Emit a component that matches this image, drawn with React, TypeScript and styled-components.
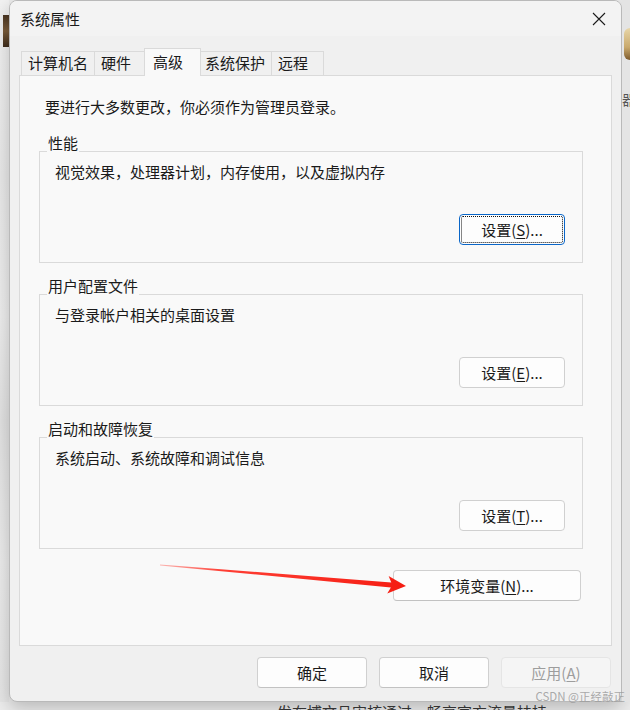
import React from 'react';
import styled, { createGlobalStyle } from 'styled-components';

const GlobalStyle = createGlobalStyle`
  html, body {
    margin: 0;
    padding: 0;
    background: #e9e9e9;
  }
  * {
    box-sizing: border-box;
  }
`;

const FONT = `"Noto Sans CJK SC", "Microsoft YaHei UI", "Noto Sans", sans-serif`;

const tabs = ['计算机名', '硬件', '高级', '系统保护', '远程'];

const groups = [
  { title: '性能', desc: '视觉效果，处理器计划，内存使用，以及虚拟内存', key: 'S', focused: true },
  { title: '用户配置文件', desc: '与登录帐户相关的桌面设置', key: 'E', focused: false },
  { title: '启动和故障恢复', desc: '系统启动、系统故障和调试信息', key: 'T', focused: false },
];

function Label({ text, hotkey }: { text: string; hotkey: string }) {
  return (
    <>
      {text}(<u>{hotkey}</u>)...
    </>
  );
}

function App() {
  return (
    <Page>
      <GlobalStyle />
      <MainRow>
        <LeftStrip>
          <Thumb />
        </LeftStrip>
        <Window>
          <TitleBar>
            <Title>系统属性</Title>
            <CloseButton>
              <svg width="14" height="14" viewBox="0 0 14 14">
                <path d="M1 1 L13 13 M13 1 L1 13" stroke="#1b1b1b" strokeWidth="1.1" fill="none" />
              </svg>
            </CloseButton>
          </TitleBar>
          <Body>
            <TabRow>
              {tabs.map((t) => (
                <Tab key={t} $active={t === '高级'}>
                  {t}
                </Tab>
              ))}
            </TabRow>
            <Panel>
              <Intro>要进行大多数更改，你必须作为管理员登录。</Intro>
              {groups.map((g, i) => (
                <Group key={g.title} $first={i === 0}>
                  <GroupTitle>{g.title}</GroupTitle>
                  <GroupDesc>{g.desc}</GroupDesc>
                  <SettingsButton $focused={g.focused}>
                    <Label text="设置" hotkey={g.key} />
                  </SettingsButton>
                </Group>
              ))}
              <EnvButton>
                <Label text="环境变量" hotkey="N" />
              </EnvButton>
            </Panel>
          </Body>
          <Footer>
            <DialogButton>确定</DialogButton>
            <DialogButton>取消</DialogButton>
            <DialogButton disabled>
              应用(<u>A</u>)
            </DialogButton>
          </Footer>
        </Window>
        <RightStrip>
          <Avatar />
          <SideGlyph>器</SideGlyph>
        </RightStrip>
      </MainRow>
      <BottomStrip>发布博文且审核通过，畅享官方流量扶持</BottomStrip>

      <Watermark>CSDN @正经敲正</Watermark>
      <ArrowLayer width="630" height="710" viewBox="0 0 630 710">
        <defs>
          <linearGradient id="arrowFade" x1="160" y1="565" x2="405" y2="586" gradientUnits="userSpaceOnUse">
            <stop offset="0" stopColor="#ff3b30" stopOpacity="0.35" />
            <stop offset="0.25" stopColor="#ff2a1f" stopOpacity="0.9" />
            <stop offset="1" stopColor="#f51d12" />
          </linearGradient>
        </defs>
        <polygon
          points="160,564.6 391.3,582.4 388.6,576 406,586 387.2,593.4 390.9,587.4 160,565.4"
          fill="url(#arrowFade)"
        />
      </ArrowLayer>
    </Page>
  );
}

const Page = styled.div`
  position: relative;
  width: 630px;
  height: 710px;
  overflow: hidden;
  display: flex;
  flex-direction: column;
  background: #ececec;
  font-family: ${FONT};
`;

const MainRow = styled.div`
  display: flex;
  height: 702px;
`;

const LeftStrip = styled.div`
  width: 9px;
  padding-top: 15px;
  background: linear-gradient(180deg, #f2f2f2 0%, #e9e9e9 25%, #eeeeee 45%, #e2e2e2 60%, #ececec 80%, #e6e6e6 100%);
`;

const Thumb = styled.div`
  margin-left: 3px;
  width: 6px;
  height: 32px;
  background: linear-gradient(180deg, #4a3522, #7a5c3a 50%, #3e2c1c);
`;

const RightStrip = styled.div`
  width: 8px;
  padding-top: 28px;
  display: flex;
  flex-direction: column;
  align-items: flex-end;
  background: #e4e4e4;
`;

const Avatar = styled.div`
  width: 6px;
  height: 32px;
  border-radius: 6px 0 0 6px;
  background: linear-gradient(180deg, #e8d6a8, #c9a96c 60%, #7d5a2c);
`;

const SideGlyph = styled.div`
  margin-top: 30px;
  width: 8px;
  overflow: hidden;
  font-size: 14px;
  line-height: 18px;
  color: #555;
  white-space: nowrap;
`;

const Window = styled.div`
  width: 613px;
  height: 702px;
  display: flex;
  flex-direction: column;
  background: #f0f0f0;
  border: 1px solid #b9b9b9;
  border-radius: 8px;
  box-shadow: 0 6px 18px rgba(0, 0, 0, 0.22);
  overflow: hidden;
`;

const TitleBar = styled.div`
  height: 35px;
  display: flex;
  align-items: center;
  justify-content: space-between;
  padding-left: 10px;
  background: #f3f3f3;
`;

const Title = styled.span`
  font-size: 15px;
  color: #1a1a1a;
`;

const CloseButton = styled.div`
  width: 44px;
  height: 35px;
  display: flex;
  align-items: center;
  justify-content: center;
`;

const Body = styled.div`
  padding: 12px 9px 0 9px;
  display: flex;
  flex-direction: column;
`;

const TabRow = styled.div`
  height: 27px;
  display: flex;
  align-items: flex-end;
  padding-left: 2px;
`;

const Tab = styled.div<{ $active: boolean }>`
  position: relative;
  min-width: ${(p) => (p.$active ? '57px' : '53px')};
  height: ${(p) => (p.$active ? '28px' : '24px')};
  margin: ${(p) => (p.$active ? '0 -2px -1px -3px' : '0 0 0 -1px')};
  padding: ${(p) => (p.$active ? '3px 8px 0 8px' : '1px 6px 0 6px')};
  z-index: ${(p) => (p.$active ? 2 : 1)};
  font-size: 15px;
  line-height: 20px;
  color: #1a1a1a;
  background: ${(p) => (p.$active ? '#f9f9f9' : '#f0f0f0')};
  border: 1px solid #dadada;
  border-bottom: none;

  &:first-child {
    margin-left: 0;
  }
`;

const Panel = styled.div`
  height: 571px;
  display: flex;
  flex-direction: column;
  padding: 21px 28px 0 19px;
  background: #f9f9f9;
  border: 1px solid #dadada;
`;

const Intro = styled.div`
  margin-left: 6px;
  font-size: 15px;
  line-height: 20px;
  color: #1a1a1a;
`;

const Group = styled.div<{ $first: boolean }>`
  position: relative;
  height: 112px;
  margin-top: ${(p) => (p.$first ? '34px' : '31px')};
  display: flex;
  flex-direction: column;
  padding: 10px 17px 0 15px;
  border: 1px solid #dadada;
`;

const GroupTitle = styled.span`
  position: absolute;
  top: -19px;
  left: 7px;
  padding: 0 1px;
  font-size: 15px;
  line-height: 20px;
  color: #1a1a1a;
  background: #f9f9f9;
`;

const GroupDesc = styled.div`
  font-size: 15px;
  line-height: 20px;
  color: #1a1a1a;
`;

const ButtonBase = styled.button`
  height: 31px;
  padding: 0;
  font-family: ${FONT};
  font-size: 15px;
  color: #1a1a1a;
  background: #fdfdfd;
  border: 1px solid #d0d0d0;
  border-bottom-color: #c2c2c2;
  border-radius: 4px;

  u {
    text-underline-offset: 2px;
  }
`;

const SettingsButton = styled(ButtonBase)<{ $focused: boolean }>`
  align-self: flex-end;
  width: 106px;
  margin-top: 32px;
  border-color: ${(p) => (p.$focused ? '#0a66c8' : '#d0d0d0')};
  outline: ${(p) => (p.$focused ? '1px dotted #111' : 'none')};
  outline-offset: -3px;
`;

const EnvButton = styled(ButtonBase)`
  align-self: flex-end;
  width: 188px;
  margin: 21px 2px 0 0;
`;

const Footer = styled.div`
  display: flex;
  justify-content: flex-end;
  gap: 12px;
  padding: 11px 10px 0 0;
`;

const DialogButton = styled(ButtonBase)`
  width: 110px;

  &:disabled {
    color: #9d9d9d;
    background: #f5f5f5;
    border-color: #e5e5e5;
  }
`;

const BottomStrip = styled.div`
  height: 8px;
  overflow: hidden;
  padding-left: 277px;
  font-size: 15px;
  line-height: 20px;
  color: #333;
  white-space: nowrap;
`;

const Watermark = styled.span`
  position: absolute;
  right: 5px;
  bottom: 6px;
  font-size: 11.5px;
  line-height: 16px;
  color: rgba(150, 150, 150, 0.8);
  white-space: nowrap;
`;

const ArrowLayer = styled.svg`
  position: absolute;
  left: 0;
  top: 0;
  pointer-events: none;
`;

export default App;
